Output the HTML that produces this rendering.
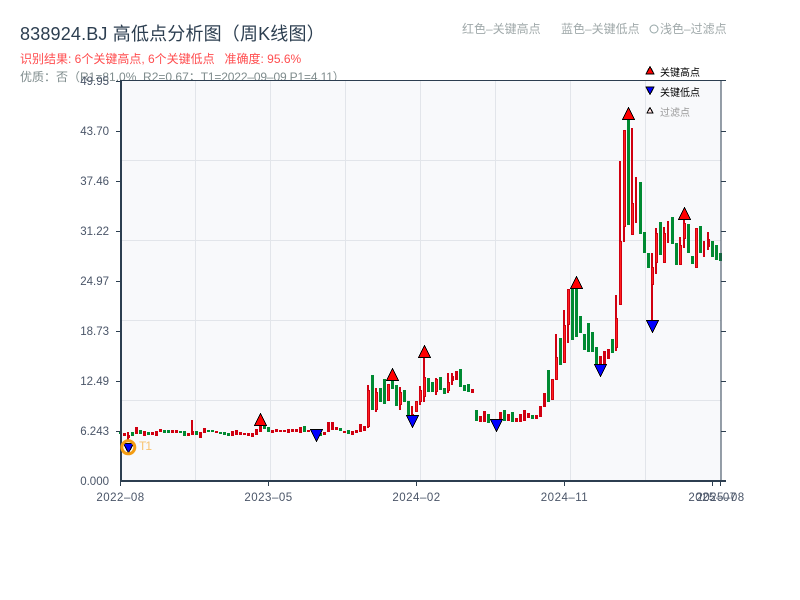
<!DOCTYPE html>
<html><head><meta charset="utf-8"><style>
html,body{margin:0;padding:0;background:#fff;width:800px;height:600px;overflow:hidden}
svg{display:block}
text{font-family:"Liberation Sans","Noto Sans CJK SC",sans-serif}
.c{shape-rendering:crispEdges}
</style></head><body>
<svg width="800" height="600" viewBox="0 0 800 600" xmlns="http://www.w3.org/2000/svg">
<text x="20" y="40" font-size="18" fill="#2c3e50" letter-spacing=".17">838924.BJ 高低点分析图（周K线图）</text>
<text x="20" y="63" font-size="12" fill="#ff4d4f">识别结果: 6个关键高点, 6个关键低点<tspan x="224.5">准确度: 95.6%</tspan></text>
<text x="20" y="81" font-size="12" fill="#7f8c8d" xml:space="preserve">优质：否（R1=81.0%  R2=0.67；<tspan x="200.7" letter-spacing="-.15">T1=2022–09–09 P1=4.11）</tspan></text>
<g font-size="12" fill="#a0a9aa">
<text x="462" y="33">红色–关键高点</text>
<text x="561" y="33">蓝色–关键低点</text>
<circle cx="654" cy="29" r="4" fill="none" stroke="#95a5a6"/>
<text x="660" y="33">浅色–过滤点</text>
</g>
<rect x="121" y="80" width="600" height="401" fill="#f8f9fb"/>
<path d="M195.5 80V481M270.5 80V481M345.5 80V481M420.5 80V481M495.5 80V481M570.5 80V481M645.5 80V481M121 160.5H721M121 240.5H721M121 320.5H721M121 400.5H721" stroke="#e2e5ea" stroke-width="1" fill="none"/>

<!-- red wicks -->
<path class="c" stroke="#d00010" stroke-width="2" fill="none" d="M128 432V441M192 420V435M368 385V428M376 388V412M400 387V410M412 406V423M420 386V405M424 357V402M436 378V395M448 373V393M452 373V385M556 334V380M564 310V363M568 289V343M616 295V351M620 161V305M624 130V242M632 128V235M636 177V223M652 253V325M656 228V274M664 227V263M668 221V243M680 237V265M684 219V248M704 241V257M708 232V250"/>
<!-- red bodies -->
<path class="c" stroke="#d00010" stroke-width="3" fill="none" d="M124.5 433V436M128.5 435V438M136.5 427V434M144.5 431V436M152.5 432V435M156.5 431V436M160.5 429V432M172.5 430V433M176.5 430V433M188.5 433V436M192.5 431V435M200.5 432V438M204.5 428V433M216.5 431V433M232.5 431V436M236.5 430V435M240.5 432V435M244.5 433V435M248.5 433V436M252.5 433V437M256.5 429V435M260.5 425V432M272.5 430V433M276.5 429V432M280.5 430V432M284.5 430V432M288.5 429V433M292.5 429V432M296.5 429V432M300.5 427V433M308.5 430V432M316.5 430V433M324.5 432V435M328.5 422V432M332.5 422V430M336.5 427V430M344.5 431V433M352.5 431V435M356.5 430V433M360.5 424V432M364.5 426V431M368.5 390V427M376.5 392V410M388.5 384V401M400.5 392V405M412.5 414V420M416.5 401V412M420.5 390V402M424.5 377V397M436.5 379V392M448.5 382V391M452.5 376V381M456.5 371V380M472.5 389V393M480.5 416V422M484.5 411V422M496.5 421V424M500.5 412V420M508.5 414V421M516.5 418V422M520.5 414V422M524.5 410V421M528.5 413V418M536.5 415V419M540.5 406V417M544.5 393V407M552.5 379V400M556.5 357V380M564.5 325V363M568.5 289V325M600.5 356V373M604.5 351V366M608.5 349V359M616.5 318V348M620.5 241V305M624.5 130V227M632.5 203V235M652.5 267V285M656.5 233V263M664.5 233V263M680.5 245V265M684.5 223V239M696.5 228V268M708.5 239V247"/>
<!-- bright bodies -->
<path class="c" stroke="#ff2020" stroke-width="1" fill="none" d="M368.5 391V426M376.5 393V409M388.5 385V400M400.5 393V404M416.5 402V411M420.5 391V401M424.5 378V396M436.5 380V391M448.5 383V390M552.5 380V399M556.5 358V379M564.5 326V362M568.5 290V324M616.5 319V347M620.5 242V304M624.5 131V226M632.5 204V234M652.5 268V284M656.5 234V262M664.5 234V262M680.5 246V264M684.5 224V238M696.5 229V267"/>
<!-- green candles -->
<path class="c" stroke="#008a32" stroke-width="3" fill="none" d="M120.5 431V434M132.5 432V436M140.5 430V434M148.5 432V435M164.5 430V433M168.5 430V433M180.5 431V433M184.5 431V436M196.5 431V435M208.5 430V432M212.5 430V432M220.5 432V434M224.5 432V435M228.5 433V436M264.5 426V429M268.5 427V432M304.5 426V432M312.5 430V432M320.5 433V436M340.5 428V431M348.5 430V434M372.5 375V410M380.5 388V402M384.5 379V404M392.5 372V389M396.5 385V406M404.5 390V402M408.5 401V415M428.5 378V392M432.5 382V392M440.5 377V390M444.5 388V394M460.5 369V387M464.5 385V391M468.5 384V392M476.5 410V421M488.5 414V423M504.5 410V421M512.5 412V422M532.5 415V419M548.5 370V402M560.5 338V365M572.5 289V340M576.5 289V337M580.5 316V333M584.5 334V350M588.5 323V352M592.5 332V352M596.5 347V365M612.5 339V353M628.5 120V225M640.5 182V234M644.5 232V253M648.5 253V268M660.5 222V255M672.5 217V244M676.5 243V265M688.5 224V253M692.5 256V264M700.5 226V253M712.5 241V257M716.5 245V260M720.5 253V261"/>

<!-- axes -->
<path class="c" d="M121 80.5H726M721 80V481" stroke="#2c3e50" stroke-width="1" fill="none"/>
<path class="c" d="M121 80V482M120 481H726" stroke="#2c3e50" stroke-width="2" fill="none"/>
<path class="c" d="M116 81.5H121M116 131.5H121M116 181.5H121M116 231.5H121M116 281.5H121M116 331.5H121M116 381.5H121M116 431.5H121M721 131.5H726M721 181.5H726M721 231.5H726M721 281.5H726M721 331.5H726M721 381.5H726M721 431.5H726M120.5 481V486M268.5 481V486M416.5 481V486M564.5 481V486M712.5 481V486M720.5 481V486" stroke="#2c3e50" stroke-width="1" fill="none"/>
<g font-size="11.5" fill="#4a5568" text-anchor="end">
<text x="109" y="85">49.95</text>
<text x="109" y="135">43.70</text>
<text x="109" y="185">37.46</text>
<text x="109" y="235">31.22</text>
<text x="109" y="285">24.97</text>
<text x="109" y="335">18.73</text>
<text x="109" y="385">12.49</text>
<text x="109" y="435">6.243</text>
<text x="109" y="485">0.000</text>
</g>
<g font-size="11.5" fill="#4a5568" text-anchor="middle" letter-spacing=".5">
<text x="120.5" y="501">2022–08</text>
<text x="268.5" y="501">2023–05</text>
<text x="416.5" y="501">2024–02</text>
<text x="564.5" y="501">2024–11</text>
<text x="712.5" y="501">2025–07</text>
<text x="720.5" y="501">2025–08</text>
</g>

<!-- markers -->
<g fill="#ff0000" stroke="#000" stroke-width="1" shape-rendering="crispEdges">
<path d="M260.5 413.5L266.5 425.5H254.5Z"/>
<path d="M392.5 368.5L398.5 380.5H386.5Z"/>
<path d="M424.5 345.5L430.5 357.5H418.5Z"/>
<path d="M576.5 276.5L582.5 288.5H570.5Z"/>
<path d="M628.5 107.5L634.5 119.5H622.5Z"/>
<path d="M684.5 207.5L690.5 219.5H678.5Z"/>
</g>
<g fill="#0000ff" stroke="#000" stroke-width="1" shape-rendering="crispEdges">
<path d="M310.5 429.5H322.5L316.5 441.5Z"/>
<path d="M406.5 415.5H418.5L412.5 427.5Z"/>
<path d="M490.5 419.5H502.5L496.5 431.5Z"/>
<path d="M594.5 364.5H606.5L600.5 376.5Z"/>
<path d="M646.5 320.5H658.5L652.5 332.5Z"/>
<path d="M123.5 443.5H133.5L128.5 453Z"/>
</g>
<circle cx="128.3" cy="447.3" r="6.5" fill="none" stroke="#f39c12" stroke-width="3"/>
<text x="139" y="450" font-size="12" fill="#f8c471" letter-spacing="-1">T1</text>

<!-- legend -->
<g stroke="#000" stroke-width="1" shape-rendering="crispEdges">
<path d="M650 66.5L654 74H646Z" fill="#ff0000"/>
<path d="M646 87H654L650 94.5Z" fill="#0000ff"/>
<path d="M650 107.5L653 113H647Z" fill="#ffe0e0"/>
</g>
<g font-size="10">
<text x="660" y="76" fill="#000">关键高点</text>
<text x="660" y="96" fill="#000">关键低点</text>
<text x="660" y="116" fill="#999">过滤点</text>
</g>
</svg>
</body></html>
